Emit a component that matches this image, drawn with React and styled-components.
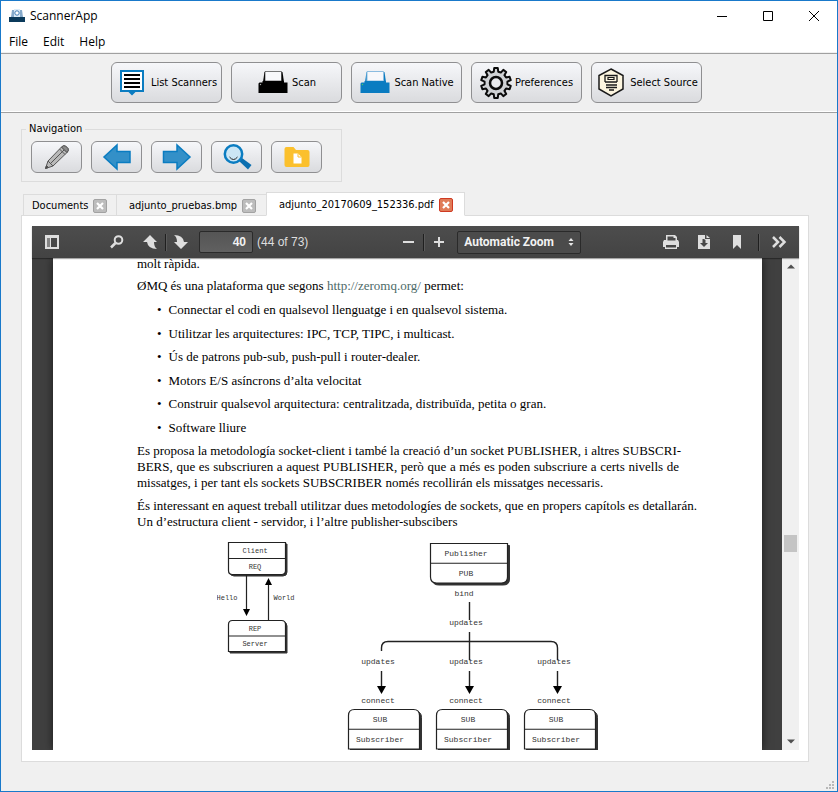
import React from "react";
import styled, { createGlobalStyle } from "styled-components";

const GlobalStyle = createGlobalStyle`
  *, *::before, *::after { box-sizing: border-box; }
  body { margin: 0; background: #f0f0f0; }
  button, input, select { font: inherit; color: inherit; margin: 0; }
  svg { display: block; flex: none; }
`;

const Window = styled.div`
  display: flex;
  flex-direction: column;
  height: 100vh;
  min-height: 480px;
  border: 1px solid #1979ca;
  background: #f0f0f0;
  color: #000;
  font: 11px/14px "DejaVu Sans Condensed", "DejaVu Sans", sans-serif;
`;

const TitleBar = styled.header`
  display: flex;
  align-items: center;
  height: 29px;
  padding-left: 8px;
  background: #fff;
  font: 12px/16px "Open Sans", "Noto Sans", sans-serif;
`;

const Title = styled.h1`
  flex: 1;
  margin: 0 0 0 5px;
  font: inherit;
`;

const WindowButton = styled.button`
  display: flex;
  align-items: center;
  justify-content: center;
  width: 46px;
  height: 29px;
  padding: 0;
  border: 0;
  background: none;
`;

const MenuBar = styled.nav`
  display: flex;
  align-items: center;
  height: 23px;
  padding-left: 2px;
  padding-top: 1px;
  border-bottom: 1px solid #f0f0f0;
  background: #fff;
  font: 12px/16px "Open Sans", "Noto Sans", sans-serif;
`;

const MenuItem = styled.button`
  padding: 0 6px;
  margin-right: 3px;
  border: 0;
  background: none;
`;

const Toolbar = styled.div`
  display: flex;
  gap: 9px;
  padding: 8px 8px 9px 110px;
  border-top: 1px solid #a0a0a0;
  border-bottom: 1px solid #a0a0a0;
  box-shadow: inset 0 -1px #fff;
`;

const RaisedButton = styled.button`
  display: flex;
  align-items: center;
  justify-content: center;
  gap: 3px;
  padding: 0;
  border: 1px solid #8f8f91;
  border-radius: 6px;
  background: linear-gradient(#f6f7fa, #dadbde);
  white-space: nowrap;
`;

const ToolButton = styled(RaisedButton)`
  width: 111px;
  height: 41px;
`;

const NavButton = styled(RaisedButton)`
  width: 51px;
  height: 32px;
`;

const Workspace = styled.main`
  display: flex;
  flex: 1;
  flex-direction: column;
  align-items: flex-start;
  min-height: 0;
  padding: 9px 28px 0 20px;
`;

const NavGroup = styled.fieldset`
  display: flex;
  gap: 9px;
  width: 321px;
  margin: 0;
  padding: 5px 9px 8px;
  border: 1px solid #dcdcdc;
`;

const Legend = styled.legend`
  padding: 0 3px;
  margin-left: -5px;
`;

const TabBar = styled.div`
  display: flex;
  align-items: flex-end;
  padding: 10px 2px 0;
  margin-bottom: -1px;
  z-index: 1;
`;

const Tab = styled.div`
  display: flex;
  align-items: center;
  gap: 5px;
  width: ${(p) => p.$width}px;
  height: ${(p) => (p.$active ? 24 : 22)}px;
  padding-top: 2px;
  padding-left: ${(p) => (p.$first ? 8 : 12)}px;
  border: 1px solid #dcdcdc;
  border-left-width: ${(p) => (p.$first || p.$active ? 1 : 0)}px;
  border-right-width: ${(p) => (p.$joined ? 0 : 1)}px;
  border-bottom-color: ${(p) => (p.$active ? "#fff" : "#dcdcdc")};
  background: ${(p) => (p.$active ? "#fff" : "#f0f0f0")};
`;

const TabLabel = styled.button`
  padding: 0;
  border: 0;
  background: none;
  white-space: nowrap;
`;

const CloseTab = styled.button`
  display: flex;
  flex: none;
  align-items: center;
  justify-content: center;
  width: 14px;
  height: 14px;
  padding: 0;
  border: 1px solid ${(p) => (p.$active ? "#cf3a22" : "#a2a2a2")};
  border-radius: 2px;
  background: ${(p) => (p.$active ? "#e07b58" : "#bdbdbd")};
`;

const TabPane = styled.section`
  display: flex;
  flex: 1;
  align-self: stretch;
  min-height: 0;
  padding: 10px 9px 11px 10px;
  border: 1px solid #dcdcdc;
  background: #fff;
`;

const StatusBar = styled.footer`
  display: flex;
  align-items: flex-end;
  justify-content: flex-end;
  height: 29px;
  padding: 0 2px 1px;
`;

const Viewer = styled.div`
  display: flex;
  flex: 1;
  flex-direction: column;
  min-width: 0;
  background: #404040;
`;

const ViewerBar = styled.div`
  display: flex;
  align-items: center;
  justify-content: space-between;
  height: 32px;
  flex: none;
  padding: 0 8px;
  background: linear-gradient(#4d4d4d, #434343);
  box-shadow: 0 1px 1px rgba(0, 0, 0, 0.35);
  color: #d9d9d9;
  font: 12px/14px "Liberation Sans", Arial, sans-serif;
  z-index: 1;
`;

const BarGroup = styled.div`
  display: flex;
  align-items: center;
  gap: ${(p) => p.$gap}px;
  padding-left: ${(p) => p.$inset || 0}px;
`;

const BarButton = styled.button`
  display: flex;
  align-items: center;
  justify-content: center;
  width: 24px;
  height: 24px;
  padding: 0;
  border: 0;
  background: none;
`;

const Separator = styled.span`
  width: 1px;
  height: 17px;
  background: #1f1f1f;
  box-shadow: 1px 0 #5a5a5a;
`;

const PageInput = styled.input`
  width: 54px;
  height: 22px;
  padding: 0 6px;
  border: 1px solid #2a2a2a;
  border-radius: 2px;
  background: linear-gradient(#555, #606060);
  color: #f2f2f2;
  font-weight: bold;
  text-align: right;
`;

const ZoomBox = styled.label`
  display: flex;
  align-items: center;
  width: 124px;
  height: 23px;
  padding-right: 6px;
  border: 1px solid #2a2a2a;
  border-radius: 2px;
  background: #4b4b4b;
`;

const ZoomSelect = styled.select`
  flex: 1;
  min-width: 0;
  height: 21px;
  padding: 0 0 0 6px;
  border: 0;
  appearance: none;
  background: transparent;
  color: #f2f2f2;
  font: bold 12px/14px Roboto, "Liberation Sans", sans-serif;
`;

const PageCount = styled.span`
  white-space: nowrap;
  color: #dedede;
`;

const Viewport = styled.div`
  display: flex;
  flex: 1;
  min-height: 0;
  overflow: hidden;
`;

const Paper = styled.article`
  flex: 1;
  min-width: 0;
  margin: 0 20px 0 21px;
  padding: 0 83px 0 84px;
  background: #fff;
  box-shadow: 0 0 9px rgba(0, 0, 0, 0.6);
  font: 13px/16px "Liberation Serif", "Times New Roman", serif;
`;

const Lead = styled.p`
  margin: 0 0 9px;
  line-height: 11px;
`;

const Paragraph = styled.p`
  margin: 0 0 7px;
`;

const Line = styled.span`
  display: block;
  text-align-last: ${(p) => (p.$full ? "justify" : "left")};
  white-space: nowrap;
`;

const DocLink = styled.a`
  color: #4d6a68;
  text-decoration: none;
`;

const Bullets = styled.ul`
  margin: 8px 0 7px;
  padding: 0 0 0 20px;
  list-style: none;
`;

const Bullet = styled.li`
  display: flex;
  gap: 7px;
  margin-bottom: ${(p) => (p.$tight ? 7 : 8)}px;
  &::before { content: "•"; }
`;

const Figures = styled.div`
  display: flex;
  gap: 47px;
  padding: 3px 0 0 80px;
  text { font-family: "Liberation Mono", "Courier New", monospace; fill: #333; text-anchor: middle; }
`;

const ScrollBar = styled.div`
  display: flex;
  flex-direction: column;
  flex: none;
  width: 17px;
  background: #f0f0f0;
`;

const ScrollButton = styled.button`
  display: flex;
  align-items: center;
  justify-content: center;
  height: 17px;
  padding: 0;
  border: 0;
  background: none;
`;

const ScrollSpace = styled.span`
  flex: ${(p) => p.$share};
`;

const ScrollThumb = styled.span`
  height: 17px;
  margin: 0 2px;
  background: #c4c4c4;
`;

const AppIcon = () => (
  <svg width="16" height="14" viewBox="0 0 16 14">
    <path d="M3 1h10l1 7H2z" fill="#86aacb" />
    <rect x="5" y="0" width="6" height="8" fill="#dcebf7" />
    <circle cx="8" cy="4" r="2.2" fill="#fff" stroke="#3e7bb5" />
    <path d="M0 8h16v5H0z" fill="#0b3a5b" />
  </svg>
);

const ListIcon = () => (
  <svg width="32" height="32" viewBox="0 0 32 32">
    <path d="M4 3h24v22h-8.500L16 28.500 12.500 25H4z" fill="#0a7cc1" />
    <rect x="6" y="5" width="20" height="18" fill="#fff" />
    <path d="M8 8h16M8 12h16M8 16h16M8 20h16" stroke="#000" strokeWidth="2" />
  </svg>
);

const ScannerIcon = ({ color, light }) => (
  <svg width="32" height="32" viewBox="0 0 32 32">
    <path d="M6 15L7.500 5h18L27 15z" fill={color} />
    <path d="M8 14V4.500h16.500V14z" fill="#f7f8fb" stroke={light ? "#8bbce0" : "#222"} strokeWidth={light ? 1 : 0.6} />
    <path d="M2.500 15.500h3V14H27v1.500h3.500V26h-29V16.500z" fill={color} />
    <circle cx="3.500" cy="17.500" r=".7" fill={light ? "#4bd05a" : "#aaa"} />
  </svg>
);

const gearPath = (() => {
  const teeth = 10;
  const points = [];
  for (let i = 0; i < teeth; i += 1) {
    [[-0.31, 11.5], [-0.19, 15], [0.19, 15], [0.31, 11.5]].forEach(([offset, r]) => {
      const a = ((i + offset) / teeth) * Math.PI * 2 - Math.PI / 2;
      points.push(`${(16 + r * Math.cos(a)).toFixed(2)} ${(16 + r * Math.sin(a)).toFixed(2)}`);
    });
  }
  return `M${points.join("L")}Z`;
})();

const GearIcon = () => (
  <svg width="32" height="32" viewBox="0 0 32 32" fill="none" stroke="#0b0b0b" strokeWidth="2" strokeLinejoin="round">
    <path d={gearPath} fill="#d0d2d5" />
    <circle cx="16" cy="16" r="6" fill="#e9eaee" strokeWidth="2.500" />
  </svg>
);

const SourceIcon = () => (
  <svg width="32" height="32" viewBox="0 0 32 32" fill="none" stroke="#1a1a1a">
    <path d="M16 2l12 6.500v13.500l-12 7-12-7V8.500z" fill="#fdf6e0" strokeWidth="1.500" />
    <path d="M10 15V8.500h12V15M10 15h12M11 18h11M11 20.500h11M14 23h5" strokeWidth="1.300" />
    <path d="M13 10.500h6v2h-6z" strokeWidth="1.200" />
  </svg>
);

const PencilIcon = () => (
  <svg width="26" height="26" viewBox="0 0 26 26" fill="#b9b9b9" stroke="#555" strokeLinejoin="round">
    <path d="M1.500 24.500L4 17 17.500 3q2-2 4-1l2.500 2.500q1 2-1 4L9 22z" />
    <path d="M4 17l5 5M6.500 19.500L20 6M15.500 5l5.500 5.500M17.500 3l5.500 5.500" fill="none" />
    <path d="M17.500 3q2-2 4-1l2.500 2.500q1 2-1 4z" fill="#8b8b8b" />
    <path d="M1.500 24.500l1-3 2 2z" fill="#444" />
  </svg>
);

const ArrowIcon = ({ right }) => (
  <svg width="30" height="28" viewBox="0 0 30 28" fill="#3390c8" stroke="#0a7cc1" strokeWidth="1.500">
    {right
      ? <path d="M1.500 8.500H15V2l13 12-13 12v-6.500H1.500z" />
      : <path d="M28 8.500H15V2L2 14l13 12v-6.500h13z" />}
  </svg>
);

const SearchIcon = () => (
  <svg width="30" height="28" viewBox="0 0 30 28" fill="none">
    <path d="M17 18l3-3 9.500 7-3.500 4.500z" fill="#0b6fb0" />
    <circle cx="11.500" cy="11" r="8.700" fill="#cbe6f5" stroke="#0a7cc1" strokeWidth="2.500" />
    <path d="M7.500 14q4 5 8 0" stroke="#222" />
  </svg>
);

const FolderIcon = () => (
  <svg width="26" height="22" viewBox="0 0 26 22">
    <path d="M2.500 1h7L12 4h11.500q2 0 2 2v13q0 2-2 2h-21q-2 0-2-2V3q0-2 2-2z" fill="#fbc02d" />
    <path d="M9.500 7.500h4.500l3.500 3.500v6.500h-8z" fill="#fff" />
    <path d="M14 7.500V11h3.500" stroke="#fbc02d" fill="none" />
  </svg>
);

const CrossIcon = () => (
  <svg width="10" height="10" viewBox="0 0 10 10" stroke="#fff" strokeWidth="2.200">
    <path d="M2 2l6 6M8 2L2 8" />
  </svg>
);

const BAR_ICONS = {
  sidebar: (
    <>
      <path d="M1 1h14v14H1zM3 4v9h3V4zM7 4v9h6V4z" fillRule="evenodd" />
      <path d="M3 4h3v9H3z" fill="#858585" />
    </>
  ),
  find: (
    <>
      <path d="M6.500 9L2 13.500" stroke="#dedede" strokeWidth="2.500" />
      <circle cx="9.500" cy="6" r="3.800" fill="none" stroke="#dedede" strokeWidth="2" />
    </>
  ),
  up: <path d="M8 1l7 7h-3q0 5 3 7-9 0-10-7H1z" />,
  down: <path d="M8 15L1 8h0l7 7 7-7h-4Q10 1 1 1q3 2 3 7H1z" />,
  minus: <path d="M3 7h11v2H3z" />,
  plus: <path d="M7 3h2v4h4v2H9v4H7V9H3V7h4z" />,
  print: <path fillRule="evenodd" d="M3 1h9l2 2v3h1l1 2v5h-2v2H2v-2H0V8l1-2h2zM4.500 2.500v4h8V4h-2V2.500zM3 11v2.500h10V11z" />,
  download: <path fillRule="evenodd" d="M2 1h7v4h5v10H2zM6.500 5v4H4l4 4 4-4H9.500V6L8 5zM10.500 1L14 4h-3.500z" />,
  bookmark: <path d="M4 1h8v14l-4-4-4 4z" />,
};

const BarIcon = ({ name }) => (
  <svg width="16" height="16" viewBox="0 0 16 16" fill="#dedede">
    {BAR_ICONS[name]}
  </svg>
);

const boxShapes = {
  bottom: (x, y, w, h, r) => `M${x} ${y}h${w}v${h - r}q0 ${r} ${-r} ${r}h${2 * r - w}q${-r} 0 ${-r} ${-r}z`,
  top: (x, y, w, h, r) => `M${x} ${y + h}V${y + r}q0 ${-r} ${r} ${-r}h${w - 2 * r}q${r} 0 ${r} ${r}v${h - r}z`,
};

const Node = ({ x, y, w, h, r, round, depth, first, second, size, shift = 0 }) => (
  <g>
    <path d={boxShapes[round](x + depth, y + depth, w, h, r)} fill="#333" stroke="#333" />
    <path d={boxShapes[round](x, y, w, h, r)} fill="#fff" stroke="#222" strokeWidth="1.200" />
    <path d={`M${x} ${y + h / 2}h${w}`} stroke="#222" strokeWidth="1.200" />
    <text x={x + w / 2 + shift} y={y + h / 4 + size / 3} fontSize={size}>{first}</text>
    <text x={x + w / 2 + shift} y={y + (h * 3) / 4 + size / 3} fontSize={size}>{second}</text>
  </g>
);

const RequestDiagram = () => (
  <svg width="81" height="116" viewBox="0 0 81 116">
    <Node x={11.5} y={2.5} w={57} h={32} r={4} round="bottom" depth={1.5} first="Client" second="REQ" size={7} shift={-2} />
    <Node x={11.5} y={80.5} w={57} h={31} r={4} round="top" depth={1.5} first="REP" second="Server" size={7} shift={-2} />
    <path d="M29.500 35v35M51.500 80V44" stroke="#222" strokeWidth="1.200" />
    <path d="M26 69h7l-3.500 7zM48 45h7l-3.500-7z" />
    <text x="10" y="60" fontSize="7">Hello</text>
    <text x="67" y="60" fontSize="7">World</text>
  </svg>
);

const PublishDiagram = () => (
  <svg width="256" height="212" viewBox="0 0 256 212">
    <Node x={85.5} y={3.5} w={77} h={39.5} r={6} round="bottom" depth={2} first="Publisher" second="PUB" size={8} shift={-3} />
    <g fill="none" stroke="#222" strokeWidth="1.400">
      <path d="M124.500 62v18M124.500 92v28M36.500 111v-3q0-6.500 6.500-6.500h163q6.500 0 6.500 6.500v12" />
      <path d="M36.500 131v16M124.500 131v16M212.500 131v16" />
    </g>
    <text x="119" y="56" fontSize="8">bind</text>
    <text x="121" y="85" fontSize="8">updates</text>
    {[0, 88, 176].map((dx) => (
      <g key={dx}>
        <text x={33 + dx} y="124" fontSize="8">updates</text>
        <path d={`M${32 + dx} 146h9l-4.500 8z`} />
        <text x={33 + dx} y="163" fontSize="8">connect</text>
        <Node x={3.5 + dx} y={169.5} w={71} h={39.5} r={6} round="top" depth={2} first="SUB" second="Subscriber" size={8} shift={-4} />
      </g>
    ))}
  </svg>
);

const TOOLS = [
  ["List Scanners", <ListIcon />],
  ["Scan", <ScannerIcon color="#000" />],
  ["Scan Native", <ScannerIcon color="#0a7cc1" light />],
  ["Preferences", <GearIcon />],
  ["Select Source", <SourceIcon />],
];

const NAV = [
  ["Edit", <PencilIcon />],
  ["Back", <ArrowIcon />],
  ["Forward", <ArrowIcon right />],
  ["Search", <SearchIcon />],
  ["Open folder", <FolderIcon />],
];

const TABS = [
  { label: "Documents", width: 94, first: true },
  { label: "adjunto_pruebas.bmp", width: 149, joined: true },
  { label: "adjunto_20170609_152336.pdf", width: 199, active: true },
];

const BULLETS = [
  "Connectar el codi en qualsevol llenguatge i en qualsevol sistema.",
  "Utilitzar les arquitectures: IPC, TCP, TIPC, i multicast.",
  "Ús de patrons pub-sub, push-pull i router-dealer.",
  "Motors E/S asíncrons d’alta velocitat",
  "Construir qualsevol arquitectura: centralitzada, distribuïda, petita o gran.",
  "Software lliure",
];

const IconButton = ({ name, label }) => (
  <BarButton aria-label={label}><BarIcon name={name} /></BarButton>
);

const ViewerToolbar = () => (
  <ViewerBar>
    <BarGroup $gap={41}>
      <IconButton name="sidebar" label="Toggle sidebar" />
      <BarGroup $gap={9}>
        <IconButton name="find" label="Find" />
        <BarGroup $gap={6}>
          <BarGroup $gap={3}>
            <IconButton name="up" label="Previous page" />
            <Separator />
            <IconButton name="down" label="Next page" />
          </BarGroup>
          <BarGroup $gap={4}>
            <PageInput aria-label="Page" defaultValue="40" />
            <PageCount>(44 of 73)</PageCount>
          </BarGroup>
        </BarGroup>
      </BarGroup>
    </BarGroup>
    <BarGroup $gap={6} $inset={10}>
      <BarGroup $gap={3}>
        <IconButton name="minus" label="Zoom out" />
        <Separator />
        <IconButton name="plus" label="Zoom in" />
      </BarGroup>
      <ZoomBox>
        <ZoomSelect aria-label="Zoom">
          <option>Automatic Zoom</option>
        </ZoomSelect>
        <svg width="6" height="10" viewBox="0 0 6 10" fill="#e6e6e6">
          <path d="M3 1l2.500 3h-5zM3 9l2.500-3h-5z" />
        </svg>
      </ZoomBox>
    </BarGroup>
    <BarGroup $gap={9}>
      <IconButton name="print" label="Print" />
      <IconButton name="download" label="Download" />
      <IconButton name="bookmark" label="Bookmark" />
      <BarGroup $gap={8}>
        <Separator />
        <BarButton aria-label="Tools">
          <svg width="16" height="16" viewBox="0 0 16 16" fill="none" stroke="#dedede" strokeWidth="2.500">
            <path d="M2 3l5 5-5 5M8.500 3l5 5-5 5" />
          </svg>
        </BarButton>
      </BarGroup>
    </BarGroup>
  </ViewerBar>
);

const Document = () => (
  <Paper>
    <Lead>molt ràpida.</Lead>
    <Paragraph>
      ØMQ és una plataforma que segons <DocLink href="http://zeromq.org/">http://zeromq.org/</DocLink> permet:
    </Paragraph>
    <Bullets>
      {BULLETS.map((text, i) => <Bullet key={text} $tight={i % 2 === 1}>{text}</Bullet>)}
    </Bullets>
    <Paragraph>
      <Line $full>Es proposa la metodología socket-client i també la creació d’un socket PUBLISHER, i altres SUBSCRI-</Line>
      <Line $full>BERS, que es subscriuren a aquest PUBLISHER, però que a més es poden subscriure a certs nivells de</Line>
      <Line>missatges, i per tant els sockets SUBSCRIBER només recollirán els missatges necessaris.</Line>
    </Paragraph>
    <Paragraph>
      <Line $full>És interessant en aquest treball utilitzar dues metodologíes de sockets, que en propers capítols es detallarán.</Line>
      <Line>Un d’estructura client - servidor, i l’altre publisher-subscibers</Line>
    </Paragraph>
    <Figures>
      <RequestDiagram />
      <PublishDiagram />
    </Figures>
  </Paper>
);

export default function App() {
  return (
    <Window>
      <GlobalStyle />
      <TitleBar>
        <AppIcon />
        <Title>ScannerApp</Title>
        <WindowButton aria-label="Minimize">
          <svg width="10" height="10"><path d="M0 5.500h10" stroke="#000" /></svg>
        </WindowButton>
        <WindowButton aria-label="Maximize">
          <svg width="10" height="10"><path d="M.5.500h9v9h-9z" fill="none" stroke="#000" /></svg>
        </WindowButton>
        <WindowButton aria-label="Close">
          <svg width="10" height="10"><path d="M0 0l10 10M10 0L0 10" stroke="#000" /></svg>
        </WindowButton>
      </TitleBar>
      <MenuBar>
        <MenuItem>File</MenuItem>
        <MenuItem>Edit</MenuItem>
        <MenuItem>Help</MenuItem>
      </MenuBar>
      <Toolbar>
        {TOOLS.map(([label, icon]) => (
          <ToolButton key={label}>{icon}<span>{label}</span></ToolButton>
        ))}
      </Toolbar>
      <Workspace>
        <NavGroup>
          <Legend>Navigation</Legend>
          {NAV.map(([label, icon]) => <NavButton key={label} aria-label={label}>{icon}</NavButton>)}
        </NavGroup>
        <TabBar>
          {TABS.map((t) => (
            <Tab key={t.label} $width={t.width} $first={t.first} $joined={t.joined} $active={t.active}>
              <TabLabel>{t.label}</TabLabel>
              <CloseTab $active={t.active} aria-label={`Close ${t.label}`}><CrossIcon /></CloseTab>
            </Tab>
          ))}
        </TabBar>
        <TabPane>
          <Viewer>
            <ViewerToolbar />
            <Viewport>
              <Document />
              <ScrollBar>
                <ScrollButton aria-label="Scroll up">
                  <svg width="8" height="5"><path d="M0 4.500L4 .5l4 4z" fill="#505050" /></svg>
                </ScrollButton>
                <ScrollSpace $share={59} />
                <ScrollThumb />
                <ScrollSpace $share={41} />
                <ScrollButton aria-label="Scroll down">
                  <svg width="8" height="5"><path d="M0 .5l4 4 4-4z" fill="#505050" /></svg>
                </ScrollButton>
              </ScrollBar>
            </Viewport>
          </Viewer>
        </TabPane>
      </Workspace>
      <StatusBar>
        <svg width="9" height="9" fill="#b8b8b8">
          <path d="M6 0h2v2H6zM3 3h2v2H3zM6 3h2v2H6zM0 6h2v2H0zM3 6h2v2H3zM6 6h2v2H6z" />
        </svg>
      </StatusBar>
    </Window>
  );
}
